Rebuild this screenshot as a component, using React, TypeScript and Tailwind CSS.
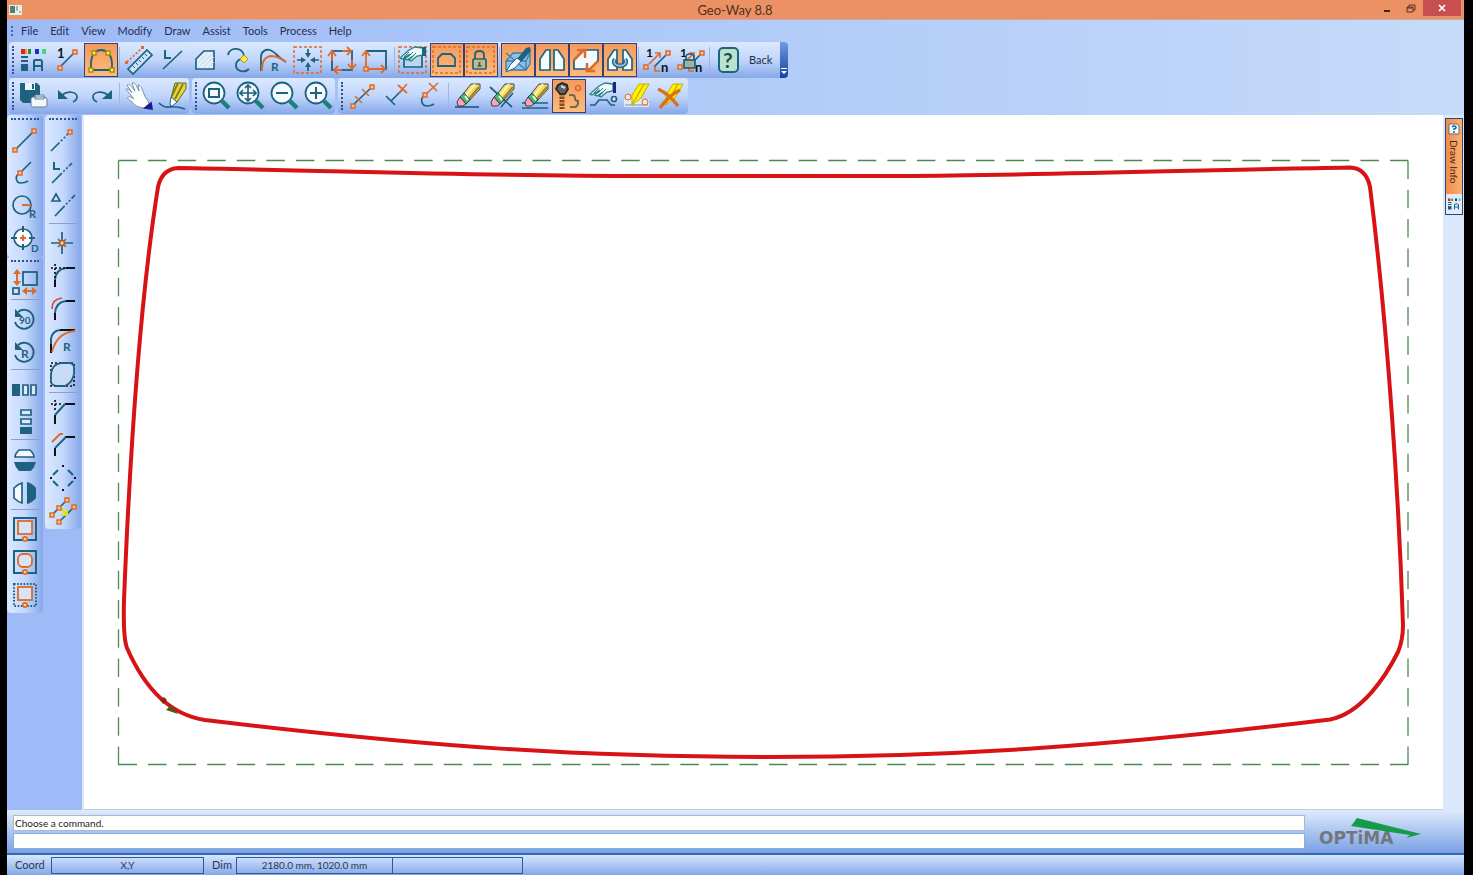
import { useState } from "react";
import type { ReactNode } from "react";
import clsx from "clsx";

const T = "#1f6280";
const O = "#dd6b2a";

// ---- shared glyph pieces, all drawn on a 32x32 grid ----

function Node({ x, y, fill = "#f7c79a", stroke = O }: { x: number; y: number; fill?: string; stroke?: string }) {
  return <rect x={x - 2} y={y - 2} width="4" height="4" fill={fill} stroke={stroke} strokeWidth="1.5" />;
}

function Glyph({ x, y, size = 10, fill = T, children }: { x: number; y: number; size?: number; fill?: string; children: string }) {
  return (
    <text x={x} y={y} fontSize={size} fontWeight="700" fill={fill} stroke="none">
      {children}
    </text>
  );
}

function DashedFrame() {
  return <rect x="2" y="3" width="27" height="26" stroke={O} strokeWidth="1.5" strokeDasharray="3 2" />;
}

function Lens({ children }: { children: ReactNode }) {
  return (
    <>
      <path d="M22 21l7 7" stroke="#1b8079" strokeWidth="4.5" />
      <circle cx="14" cy="13" r="10.5" fill="#f4f9ff" stroke={T} strokeWidth="1.8" />
      {children}
    </>
  );
}

function Eraser() {
  return (
    <g strokeWidth="1">
      <path d="M20 4h9v5L18 21l-6-7z" fill="#f4d967" stroke="#33484f" />
      <path d="M24 4l-9 12" stroke="#fff3b0" strokeWidth="2" />
      <path d="M28 7L17 20" stroke="#9c8426" strokeWidth="2" />
      <path d="M13 13l6 7-4 4-6-7z" fill="#3fbf68" stroke="#174f49" />
      <path d="M14 16l3 4" stroke="#e9fff0" strokeWidth="2" />
      <path d="M9 17l6 7-3 2H7l-1-4z" fill="#f2a5c6" stroke="#5c2c44" />
    </g>
  );
}

function Highlighter() {
  return (
    <>
      <path d="M18 4L11 15v10l9-7 8-14z" fill="#fff200" stroke="#c4a90c" strokeWidth="1" />
      <path d="M23 4l-8 14M11 24l4-6" stroke="#caa400" strokeWidth="1.2" />
    </>
  );
}

function PointingHand() {
  return (
    <>
      <path d="M26 4l-8-1-6 3-9 8 2 1 8-5-5 5 2 1 6-4-4 4 2 1 6-5 6-1z" fill="#e9f7f7" stroke="#2a7f86" strokeWidth="1.3" />
      <path d="M12 8l-5 5M16 8l-5 5M19 9l-4 4" stroke="#2a7f86" strokeWidth="1" />
    </>
  );
}

function Padlock() {
  return (
    <>
      <path d="M10 15v-4q0-4 4.500-4t4.500 4v4" strokeWidth="1.8" />
      <rect x="8" y="15" width="13" height="10" rx="1" fill="#c3ba84" />
      <path d="M14.500 18v4M12.500 22h4" stroke="#37584f" />
    </>
  );
}

function RotateRing() {
  return (
    <>
      <path d="M9 9a9.500 9.500 0 1 1-3 10" strokeWidth="1.8" />
      <path d="M6 6v8h8z" fill={T} stroke="none" />
    </>
  );
}

function PlateFrame({ dotted, round }: { dotted?: boolean; round?: boolean }) {
  return (
    <>
      <rect x="5" y="5" width="22" height="22" strokeWidth="2" strokeDasharray={dotted ? "1.6 1.6" : undefined} />
      <rect x="9" y="8" width="14" height="13" rx={round ? 5 : 0} fill="#d9e3f6" stroke={O} strokeWidth="1.8" />
      <circle cx="16" cy="26" r="2.2" fill="#fbd1ad" stroke={O} />
    </>
  );
}

function NumberedArrow() {
  return (
    <>
      <Glyph x={5} y={13} size={12} fill="#111">1</Glyph>
      <path d="M13 23L25 11" />
      <path d="M8 20l10-10M14 9l5 0v5M14 22v5h5" stroke={O} />
      <Node x={27} y={9} />
      <Node x={5} y={23} />
      <Glyph x={20} y={28} size={13} fill="#111">n</Glyph>
    </>
  );
}

const GLYPHS = {
  layers: (
    <g stroke="none">
      <path d="M4 5h4v5H4z" fill="#e3211c" />
      <path d="M8 5h2v5H8z" fill="#e8a31d" />
      <path d="M11 5h3v5h-3z" fill="#2f8b3c" />
      <path d="M18 5h4v5h-4z" fill="#1b2fc4" />
      <path d="M25 5h2v5h-2z" fill="#35d7c2" />
      <path d="M27 5h2v5h-2z" fill="#55d63b" />
      <path d="M4 12h7v2H4zM4 16h7v2H4zM4 20h7v7H4z" fill={T} />
      <path d="M17 27V17q0-1 1-1h5q2 0 2 2v9M17 22h8" stroke={T} strokeWidth="2" />
    </g>
  ),
  numberLine: (
    <>
      <path d="M8 24L24 8" />
      <Node x={9} y={24} />
      <Node x={24} y={8} />
      <Glyph x={6} y={14} size={13} fill="#111">1</Glyph>
    </>
  ),
  vertices: (
    <>
      <path d="M6 26v-6C6 15 7 12 9 9c4-4 10-4 14 0 3 3 4 6 4 11v6z" strokeWidth="1.8" />
      {[[6, 26], [27, 26], [9, 9], [23, 9]].map(([x, y]) => (
        <Node key={`${x}-${y}`} x={x} y={y} fill="#fff23a" stroke="#a58f12" />
      ))}
    </>
  ),
  ruler: (
    <>
      <path d="M25 6l5 5-19 19-5-5z" fill="#cfe1f7" />
      <path d="M11 22l2 2M14 19l2 2M17 16l2 2M20 13l2 2M23 10l2 2" strokeWidth="1" />
      <path d="M5 18L20 4" stroke={O} strokeDasharray="2 2" />
      <path d="M3 17h3v3H3zM19 2h3v3h-3z" fill={O} stroke="none" />
    </>
  ),
  lineL: (
    <>
      <path d="M9 6v8h6" strokeWidth="2" />
      <path d="M7 25L26 7" />
    </>
  ),
  polygon: (
    <>
      <path d="M6 25V15l8-8h10v18z" fill="#e4effc" />
      <path d="M8 24l15-15M13 24l11-11M18 24l6-6M8 19l9-9" stroke="#c3d5e8" strokeWidth="1" />
    </>
  ),
  arcs: (
    <>
      <path d="M4 11C6 2 20 3 20 13c-1 3-8 1-8 8 0 7 9 8 13 4" strokeWidth="1.8" />
      <path d="M20 11l4 4-4 4-4-4z" fill="#f5ef35" stroke="#a59a20" strokeWidth="1" />
    </>
  ),
  curveR: (
    <>
      <path d="M3 27V13C3 7 8 5 12 6c6 2 8 8 16 12" strokeWidth="1.8" />
      <path d="M4 27c0-9 2-14 9-15 6 0 11 3 15 6" stroke={O} strokeWidth="1.8" />
      <Glyph x={13} y={27} size={12}>R</Glyph>
    </>
  ),
  center: (
    <>
      <DashedFrame />
      <path d="M16 5v6M16 27v-6M5 16h6M27 16h-6" />
      <path d="M13 9h6l-3 5zM13 23h6l-3-5zM9 13v6l5-3zM23 13v6l-5-3z" fill={T} stroke="none" />
    </>
  ),
  rotateSquare: (
    <>
      <rect x="6" y="7" width="20" height="19" strokeWidth="1.8" />
      <path d="M16 7h9M21 3l4 4-4 4M26 16v9M22 20l4 5 4-5M16 26H8M12 22l-4 4 4 4M6 17V8M2 12l4-5 4 5" stroke={O} strokeWidth="1.8" />
    </>
  ),
  originSquare: (
    <>
      <path d="M6 7h20v19" strokeWidth="1.8" />
      <path d="M6 25V8M2 12l4-5 4 5M6 25h19M21 21l4 4-4 4" stroke={O} strokeWidth="1.8" />
      <Node x={6} y={25} />
    </>
  ),
  selectHand: (
    <>
      <DashedFrame />
      <path d="M7 12v11h18V12" fill="#bcd6ee" />
      <PointingHand />
      <path d="M25 3h4v9h-4z" fill={T} stroke="none" />
    </>
  ),
  framedShape: (
    <>
      <DashedFrame />
      <path d="M7 22v-8l4-4h9l4 4v8z" strokeWidth="1.8" />
    </>
  ),
  framedLock: (
    <>
      <DashedFrame />
      <Padlock />
    </>
  ),
  envelope: (
    <>
      <path d="M4 17l7-8h17v11l-4 6H4z" fill="#8fc0e6" stroke="#3f7ea8" strokeWidth="1.3" />
      <path d="M4 17h20l4-8M24 17v9M4 9l20 17" stroke="#3f7ea8" strokeWidth="1.3" />
      <path d="M28 3l-4 1-9 11 4 3L29 7z" fill={T} stroke="none" />
      <path d="M15 14l4 3-6 7-9 4 4-7z" fill="#f5f9fb" strokeWidth="1" />
    </>
  ),
  halves: <path d="M4 26V15l6-9h4v20zM18 26V6h4l6 9v11z" fill="#f4fbff" />,
  flip: (
    <>
      <path d="M4 25v-9L13 6h15v11l-8 8z" fill="#f4fbff" />
      <path d="M4 16L14 6M28 17L18 27" stroke={O} strokeWidth="2.5" />
      <path d="M7 6h8v8M17 19v8h8" stroke={O} strokeWidth="2.5" />
    </>
  ),
  joinHalves: (
    <>
      <path d="M4 26V15l6-9h3v20zM19 26V6h3l6 9v11z" fill="#f4fbff" />
      <path d="M11 15c-5 9 15 9 10 0" stroke={T} strokeWidth="4.5" />
      <path d="M11 15c-5 9 15 9 10 0" stroke="#8fc0e6" strokeWidth="1.8" />
    </>
  ),
  sequence: <NumberedArrow />,
  sequenceLock: (
    <>
      <NumberedArrow />
      <path d="M11 16v-3q0-3 4-3t4 3v3" />
      <rect x="9" y="16" width="11" height="8" fill="#a5b29a" />
    </>
  ),
  help: (
    <>
      <rect x="7" y="4" width="19" height="24" rx="4" fill="#b9e3cf" strokeWidth="2" />
      <Glyph x={11} y={24} size={21} fill="#1d4f55">?</Glyph>
    </>
  ),
  save: (
    <>
      <path d="M3 3h17l3 3v17H6l-3-3z" fill={T} stroke="none" />
      <path d="M8 3h10v7H8z" fill="#e8f4fb" stroke="none" />
      <path d="M15 4h2v5h-2z" fill={T} stroke="none" />
      <path d="M18 15h9v4h-9zM14 19q0-2 2-2h11q3 0 3 3v5q0 2-2 2H16q-2 0-2-2z" fill="#f5f8fb" stroke="#5f7f99" strokeWidth="1" />
    </>
  ),
  undo: (
    <>
      <path d="M7 10v9h10z" fill={T} stroke="none" />
      <path d="M11 15c6-5 15-3 15 2q0 3-4 5" />
    </>
  ),
  redo: (
    <>
      <path d="M27 10v9H17z" fill={T} stroke="none" />
      <path d="M23 15c-6-5-15-3-15 2q0 3 4 5" />
    </>
  ),
  hand: (
    <>
      <path d="M4 9c2-1 4 2 6 4L5 5c2-2 4 1 8 6L10 3c3-1 4 2 7 8l-1-6c3 0 4 4 6 9 1 4 5 7 5 10l-5 4c-5-1-8-1-12-6-2-2-6-4-4-5s4 1 6 2c-3-4-7-8-8-10z" fill="#fff" stroke="#7792a5" strokeWidth="1" />
      <path d="M23 28l6-5 1 6z" fill="#17208c" stroke="#17208c" />
    </>
  ),
  pencil: (
    <>
      <path d="M19 3h11v6l-9 13-6-4z" fill="#ecd435" stroke="#5b6b22" strokeWidth="1" />
      <path d="M22 3l-6 13M27 4l-8 15" stroke="#7b7d24" strokeWidth="1.8" />
      <path d="M15 17l6 5-6 5-1-3z" fill="#fff" stroke={T} strokeWidth="1" />
      <path d="M14 25v3l3-2z" fill={T} stroke="none" />
      <path d="M3 23q5 5 11 4t15 2" />
    </>
  ),
  zoomWindow: <Lens><rect x="9" y="9" width="10" height="8" strokeWidth="2" /></Lens>,
  zoomAll: <Lens><path d="M14 5v16M6 13h16M11 8l3-3 3 3M11 18l3 3 3-3M9 10l-3 3 3 3M19 10l3 3-3 3" /></Lens>,
  zoomOut: <Lens><path d="M8 13h12" strokeWidth="2" /></Lens>,
  zoomIn: <Lens><path d="M8 13h12M14 7v12" strokeWidth="2" /></Lens>,
  divide: (
    <>
      <path d="M7 25L26 7" />
      <path d="M9 16l7 7M16 9l7 7" stroke={O} strokeWidth="1.5" />
      <Node x={7} y={26} />
      <Node x={26} y={7} />
    </>
  ),
  tick: (
    <>
      <path d="M6 16l9 9M11 21L23 9" />
      <path d="M18 5l9 8M27 4l-8 9" stroke={O} />
    </>
  ),
  hookTick: (
    <>
      <path d="M11 15c-6 4-3 11 2 11q4 0 7-2" />
      <path d="M11 15l13-12M15 3l8 8" stroke={O} />
      <Node x={11} y={15} />
    </>
  ),
  erase: (
    <>
      <path d="M4 27h24" />
      <Eraser />
    </>
  ),
  eraseCross: (
    <>
      <path d="M5 7l22 20M16 27L28 13" />
      <Eraser />
    </>
  ),
  eraseLines: (
    <>
      <path d="M3 23h26M3 28h26" strokeWidth="1.5" />
      <Eraser />
    </>
  ),
  screw: (
    <>
      <path d="M9 13v16" stroke="#8b4a1e" strokeWidth="5" strokeDasharray="2.500 1" />
      <path d="M5 5l4-2 5 2 1 4-3 5H7L3 9z" fill="#5d6265" stroke="#222425" />
      <path d="M8 6l4 2" stroke="#d5dadd" strokeWidth="2" />
      <circle cx="25" cy="8" r="2.5" stroke={O} />
      <path d="M16 15h3q3 0 3 3t3 3v2q0 3-3 4h-5" stroke="#6d6b4c" strokeWidth="2" />
    </>
  ),
  drag: (
    <>
      <PointingHand />
      <path d="M26 2h3v11h-3z" fill="#1c2290" stroke="none" />
      <path d="M3 25h5l4-5h8l4 5h4" />
      <circle cx="27" cy="19" r="2.5" fill="#dceafa" />
    </>
  ),
  highlight: (
    <>
      <path d="M3 19h25v8H3z" fill="#dfeaf2" stroke="none" />
      <path d="M4 25h23" stroke="#9fb8c6" />
      <Highlighter />
      <circle cx="7" cy="17" r="3" fill="#f6e6dd" stroke={O} strokeWidth="1" />
      <circle cx="24" cy="22" r="3" fill="#f6e6dd" stroke={O} strokeWidth="1" />
    </>
  ),
  highlightOff: (
    <>
      <Highlighter />
      <path d="M3 9q11 5 20 17M25 10Q13 16 5 28" stroke="#d9731b" strokeWidth="3.5" />
    </>
  ),
  segment: (
    <>
      <path d="M6 26L25 7" />
      <Node x={6} y={26} />
      <Node x={25} y={7} />
    </>
  ),
  hook: (
    <>
      <path d="M22 5L11 16M11 16c-6 3-4 10 1 10q4 0 7-2" />
      <Node x={11} y={16} />
    </>
  ),
  circleR: (
    <>
      <circle cx="13" cy="15" r="9" />
      <path d="M13 15h9" stroke={O} strokeWidth="2" />
      <Glyph x={20} y={28} size={11}>R</Glyph>
    </>
  ),
  circleD: (
    <>
      <circle cx="14" cy="15" r="9" fill="#f8fbff" />
      <path d="M14 3v6M14 21v6M2 15h6M20 15h6" strokeWidth="2" />
      <path d="M14 12v6M11 15h6" stroke={O} strokeWidth="2" />
      <Glyph x={22} y={29}>D</Glyph>
    </>
  ),
  scale: (
    <>
      <rect x="14" y="6" width="14" height="13" strokeWidth="1.8" />
      <rect x="4" y="22" width="6" height="6" />
      <path d="M8 6v11M15 25h10" stroke={O} strokeWidth="2" />
      <path d="M4 8l4-5 4 5zM4 15l4 5 4-5zM18 21l-5 4 5 4zM23 21l5 4-5 4z" fill={O} stroke="none" />
    </>
  ),
  rotate90: (
    <>
      <RotateRing />
      <Glyph x={10} y={21} size={10}>90</Glyph>
    </>
  ),
  rotateR: (
    <>
      <RotateRing />
      <Glyph x={12} y={22} size={12}>R</Glyph>
    </>
  ),
  alignRow: (
    <>
      <path d="M3 11h8v12H3z" fill={T} stroke="none" />
      <path d="M14 12h5v10h-5zM22 12h5v10h-5z" fill="#dce9fa" />
    </>
  ),
  alignColumn: (
    <>
      <path d="M11 21h12v7H11z" fill={T} stroke="none" />
      <path d="M12 4h10v5H12zM12 13h10v5H12z" fill="#dce9fa" />
    </>
  ),
  mirrorV: (
    <>
      <path d="M6 14q0-3 4-7h11q4 4 4 7z" fill="#f5f9ff" />
      <path d="M5 19h22q-1 5-5 9H10q-4-4-5-9z" fill={T} stroke="none" />
    </>
  ),
  mirrorH: (
    <>
      <path d="M13 7v20q-4-1-8-5V12q4-4 8-5z" fill="#f5f9ff" />
      <path d="M18 6q5 1 9 6v10q-4 5-9 6z" fill={T} stroke="none" />
    </>
  ),
  plateSquare: <PlateFrame />,
  plateRound: <PlateFrame round />,
  plateDotted: <PlateFrame dotted />,
  dashLine: (
    <>
      <path d="M4 27L23 8" strokeDasharray="12 2 2 2 2 2" />
      <Node x={23} y={8} />
    </>
  ),
  dashL: (
    <>
      <path d="M7 5v7h6" strokeWidth="2" />
      <path d="M5 26L25 6" strokeDasharray="14 2 2 2 2 2" />
    </>
  ),
  dashAngle: (
    <>
      <path d="M9 4l4 7H5z" />
      <path d="M8 26L28 5" strokeDasharray="14 2 2 2 2 2" />
    </>
  ),
  point: (
    <>
      <path d="M15 5v22M4 16h22" />
      <path d="M11 12l8 8M19 12l-8 8" stroke="#a9602f" />
      <circle cx="15" cy="16" r="2.5" fill="#f4cfae" stroke="#a9602f" />
    </>
  ),
  fillet: (
    <>
      <path d="M8 27v-7M19 8h9" stroke="#111" strokeWidth="2" />
      <path d="M8 20Q9 9 19 8" strokeWidth="2" />
      <path d="M4 8h14M8 4v14" stroke="#111" strokeDasharray="2 2" />
    </>
  ),
  filletArc: (
    <>
      <path d="M8 27v-7M19 8h9" stroke="#111" strokeWidth="2" />
      <path d="M8 20Q9 9 19 8" strokeWidth="2" />
      <path d="M5 16q0-10 10-11" stroke="#d9482a" />
    </>
  ),
  filletR: (
    <>
      <path d="M4 27V13q1-8 9-9" strokeWidth="2" />
      <path d="M13 4h15M4 18v9" stroke="#111" strokeWidth="2" />
      <path d="M28 5C15 6 8 14 5 26" stroke={O} strokeWidth="1.8" />
      <Glyph x={16} y={25} size={12}>R</Glyph>
    </>
  ),
  filletAll: (
    <>
      <rect x="4" y="4" width="23" height="23" stroke="#111" strokeDasharray="2 2" />
      <path d="M4 15Q5 5 14 4h8q5 0 5 5v6q-2 9-9 12H9q-5-1-5-5z" fill="#c9dcf7" strokeWidth="1.8" />
    </>
  ),
  chamfer: (
    <>
      <path d="M8 28v-9M18 8h10" stroke="#111" strokeWidth="2" />
      <path d="M8 19L18 8" strokeWidth="2" />
      <path d="M4 8h12M8 4v12" stroke="#111" strokeDasharray="2 2" />
    </>
  ),
  chamferArc: (
    <>
      <path d="M8 27v-8M18 8h10" stroke="#111" strokeWidth="2" />
      <path d="M8 19L19 8" strokeWidth="2" />
      <path d="M5 13l8-8h3" stroke={O} strokeWidth="2" />
    </>
  ),
  chamferAll: (
    <>
      <path d="M11 8l-5 5M21 8l5 5M6 19l5 5M26 19l-5 5" strokeWidth="2" />
      <path d="M15 3h2v2h-2zM15 27h2v2h-2zM3 15h2v2H3zM27 15h2v2h-2z" fill="#111" stroke="none" />
    </>
  ),
  parallel: (
    <>
      <path d="M5 20L20 5M12 27l15-15" />
      <path d="M14 13l6 7M20 14v6h-6" stroke="#d6e01c" strokeWidth="2" />
      <Node x={5} y={20} />
      <Node x={12} y={13} />
      <Node x={20} y={5} />
      <Node x={27} y={12} />
      <Node x={12} y={27} />
    </>
  ),
};

type GlyphName = keyof typeof GLYPHS;

interface Tool {
  icon: GlyphName;
  label: string;
}

const tool = (icon: GlyphName, label: string): Tool => ({ icon, label });

const MENUS = ["File", "Edit", "View", "Modify", "Draw", "Assist", "Tools", "Process", "Help"];

// Each toolbar is a list of groups; a divider is drawn between groups.
const MAIN_TOOLS: Tool[][] = [
  [tool("layers", "Layers"), tool("numberLine", "Element order"), tool("vertices", "Show vertices")],
  [
    tool("ruler", "Measure"),
    tool("lineL", "Line length"),
    tool("polygon", "Area"),
    tool("arcs", "Arc info"),
    tool("curveR", "Curve radius"),
    tool("center", "Center"),
    tool("rotateSquare", "Direction"),
    tool("originSquare", "Origin"),
  ],
  [tool("selectHand", "Select shape"), tool("framedShape", "Frame"), tool("framedLock", "Lock frame")],
  [tool("envelope", "Cut sheet"), tool("halves", "Split"), tool("flip", "Flip"), tool("joinHalves", "Join")],
  [tool("sequence", "Sequence"), tool("sequenceLock", "Lock sequence")],
  [tool("help", "Help topics")],
];

const FILE_TOOLS: Tool[][] = [
  [tool("save", "Save"), tool("undo", "Undo"), tool("redo", "Redo")],
  [tool("hand", "Pan"), tool("pencil", "Redraw")],
];

const ZOOM_TOOLS: Tool[][] = [
  [tool("zoomWindow", "Zoom window"), tool("zoomAll", "Zoom all"), tool("zoomOut", "Zoom out"), tool("zoomIn", "Zoom in")],
];

const EDIT_TOOLS: Tool[][] = [
  [tool("divide", "Divide"), tool("tick", "Break line"), tool("hookTick", "Break arc")],
  [
    tool("erase", "Erase"),
    tool("eraseCross", "Erase crossing"),
    tool("eraseLines", "Erase all"),
    tool("screw", "Tool path"),
    tool("drag", "Drag point"),
    tool("highlight", "Highlight"),
    tool("highlightOff", "Clear highlight"),
  ],
];

const DRAW_TOOLS: Tool[][] = [
  [tool("segment", "Line"), tool("hook", "Arc"), tool("circleR", "Circle by radius"), tool("circleD", "Circle by diameter")],
];

const TRANSFORM_TOOLS: Tool[][] = [
  [tool("scale", "Scale")],
  [tool("rotate90", "Rotate 90"), tool("rotateR", "Rotate")],
  [tool("alignRow", "Copy in row"), tool("alignColumn", "Copy in column")],
  [tool("mirrorV", "Mirror vertical"), tool("mirrorH", "Mirror horizontal")],
  [tool("plateSquare", "Square plate"), tool("plateRound", "Round plate"), tool("plateDotted", "Free plate")],
];

const ASSIST_TOOLS: Tool[][] = [
  [tool("dashLine", "Assist line"), tool("dashL", "Assist line by length"), tool("dashAngle", "Assist line by angle")],
  [
    tool("point", "Point"),
    tool("fillet", "Fillet"),
    tool("filletArc", "Fillet arc"),
    tool("filletR", "Fillet by radius"),
    tool("filletAll", "Fillet all"),
  ],
  [tool("chamfer", "Chamfer"), tool("chamferArc", "Chamfer outer"), tool("chamferAll", "Chamfer all"), tool("parallel", "Parallel")],
];

const INITIAL_ACTIVE: GlyphName[] = ["vertices", "framedShape", "framedLock", "envelope", "halves", "flip", "joinHalves", "screw"];

function ToolIcon({ name, className }: { name: GlyphName; className?: string }) {
  return (
    <svg viewBox="0 0 32 32" className={clsx("shrink-0", className ?? "size-8")} fill="none" stroke={T} strokeWidth="1.7" aria-hidden>
      {GLYPHS[name]}
    </svg>
  );
}

interface ToolbarProps {
  groups: Tool[][];
  active: GlyphName[];
  onToggle: (name: GlyphName) => void;
  vertical?: boolean;
  children?: ReactNode;
}

function Toolbar({ groups, active, onToggle, vertical = false, children }: ToolbarProps) {
  return (
    <div
      role="toolbar"
      className={clsx(
        "flex shrink-0 rounded-sm",
        vertical
          ? "w-9 flex-col items-center bg-linear-to-r from-[#dbe9ff] via-[#c3d8fc] to-[#86a7e8] pb-0.5"
          : "h-9 items-center bg-linear-to-b from-[#dbe9ff] via-[#c1d6fb] to-[#86a8e9]",
      )}
    >
      <span
        className={clsx(
          "shrink-0 border-dotted border-[#34508f]",
          vertical ? "my-[3px] h-px w-7 border-t-2" : "mr-0.5 ml-[3px] h-7 w-px border-l-2",
        )}
      />
      {groups.map((group, i) => (
        <div key={group[0].icon} className={clsx("flex", vertical && "flex-col items-center")}>
          {i > 0 ? (
            <span
              className={clsx(
                "shrink-0",
                vertical ? "mt-px mb-0.5 h-px w-7 bg-[#8d9fc4]" : "mx-px my-1 w-px bg-[#a3b6da]",
              )}
            />
          ) : null}
          {group.map(({ icon, label }) => (
            <button
              key={icon}
              type="button"
              aria-label={label}
              aria-pressed={active.includes(icon)}
              onClick={() => onToggle(icon)}
              className={clsx(
                "grid w-[34px] place-items-center",
                vertical ? "h-[33px]" : "h-[34px]",
                active.includes(icon) && "border border-[#3b3d77] bg-linear-to-b from-[#f29a60] to-[#fdbb79]",
              )}
            >
              <ToolIcon name={icon} />
            </button>
          ))}
        </div>
      ))}
      {children}
    </div>
  );
}

function TitleBar() {
  return (
    <header className="flex h-5 shrink-0 items-center border-b border-[#d3a79b] bg-[#eb9164]">
      <svg viewBox="0 0 14 12" className="ml-0.5 h-3 w-3.5" aria-hidden>
        <path d="M0 1h13v10H0z" fill="#e9eee9" />
        <path d="M1 2h5v7H1z" fill="#4f8279" />
        <path d="M7 2h2v5H7zM10 7h2v2h-2z" fill="#9db7b0" />
      </svg>
      <h1 className="flex-1 pl-[72px] text-center text-[13px] leading-5 text-[#54301f]">Geo-Way 8.8</h1>
      <div className="flex h-full items-start">
        <button type="button" aria-label="Minimize" className="grid h-[17px] w-6 place-items-center">
          <svg viewBox="0 0 10 10" className="size-2.5" aria-hidden>
            <path d="M2 6h6v2H2z" fill="#3b2318" />
          </svg>
        </button>
        <button type="button" aria-label="Restore" className="grid h-[17px] w-6 place-items-center">
          <svg viewBox="0 0 10 10" className="size-2.5" fill="none" stroke="#5a3322" aria-hidden>
            <path d="M1 3h6v5H1zM3 3V1h6v5H7M1 4h6" />
          </svg>
        </button>
        <button type="button" aria-label="Close" className="mr-[3px] grid h-4 w-[38px] place-items-center bg-[#c84f50]">
          <svg viewBox="0 0 10 10" className="size-2.5" stroke="#fff" strokeWidth="1.7" aria-hidden>
            <path d="M2 2l6 6M8 2L2 8" />
          </svg>
        </button>
      </div>
    </header>
  );
}

function MenuBar() {
  return (
    <nav className="flex h-[22px] shrink-0 items-center pl-1">
      <span className="mr-0.5 h-2.5 w-px border-l-2 border-dotted border-[#4a64a0]" />
      {MENUS.map((menu) => (
        <button key={menu} type="button" className="px-1.5 text-[11px] leading-5 text-[#26304a]">
          {menu}
        </button>
      ))}
    </nav>
  );
}

function Drawing() {
  return (
    <svg viewBox="84 115 1359 694" className="h-full w-full" fill="none" aria-label="Panel outline">
      <g stroke="#4d8b4d" strokeWidth="1.3">
        <path d="M118.500 160.500H1408M118.500 764.500H1408" strokeDasharray="18.500 11.070" />
        <path d="M118.500 160.500V765M1408 160.500V765" strokeDasharray="18.500 10.800" />
      </g>
      <path
        d="M178 168C320 170 480 176 640 176H900C1050 175 1200 170 1350 167.500Q1366 168 1370 187C1388 330 1399 500 1403 625Q1403 640 1398 652C1386 676 1362 713 1330 719.500C1120 745 960 757 770 757C580 757 430 747 205 720C165 714 141 680 127 648Q123 638 124 600C130 450 140 300 158 187Q162 169 178 168Z"
        stroke="#d81316"
        strokeWidth="4"
        strokeLinejoin="round"
      />
      <path d="M160 700l4-3 3 3-4 4z" fill="#8a2a12" />
      <path d="M166 710l5-5 7 9z" fill="#4f5a12" />
    </svg>
  );
}

function InfoDock() {
  return (
    <aside className="w-[21px] shrink-0 bg-[#dbe8fb] pt-[3px] pl-0.5">
      <div className="flex w-[18px] flex-col border border-[#34436f]">
        <button
          type="button"
          className="flex h-[75px] w-full flex-col items-center gap-[5px] bg-linear-to-r from-[#f08b48] to-[#fbb071] pt-1 text-[10px] leading-4 text-[#3c2b21]"
        >
          <svg viewBox="0 0 12 12" className="size-3 shrink-0" aria-hidden>
            <path d="M1 1h8l2 2v8H1z" fill="#f3faff" stroke="#56758c" />
            <path d="M4 4q2-2 4 0 0 2-2 2v1M6 8v2" fill="none" stroke={T} strokeWidth="1.5" />
          </svg>
          <span className="[writing-mode:vertical-rl] whitespace-nowrap">Draw Info</span>
        </button>
        <button type="button" aria-label="Layer list" className="grid h-5 w-full place-items-center bg-[#dfeafb]">
          <ToolIcon name="layers" className="size-4" />
        </button>
      </div>
    </aside>
  );
}

function OptimaLogo() {
  return (
    <svg viewBox="0 0 104 30" className="h-[30px] w-[104px] shrink-0" aria-label="Optima">
      <text x="0" y="27" fontSize="17" fontWeight="700" fill="#73767c" className="font-['DejaVu_Sans',sans-serif]">
        OPTiMA
      </text>
      <path d="M38 1L32 9 84 17l7 1-4 3 15-4z" fill="#169b4b" />
    </svg>
  );
}

function CommandPanel() {
  const [command, setCommand] = useState("");

  return (
    <section className="flex h-[45px] shrink-0 items-center border-b-2 border-[#3567b4] bg-linear-to-b from-[#dfebfc] to-[#7aa0e3] pr-[41px] pl-1.5">
      <div className="flex flex-1 flex-col gap-0.5">
        <output className="h-4 border border-[#a9b8cc] bg-white pl-px text-[10px] leading-3.5 text-[#222]">Choose a command.</output>
        <input
          type="text"
          aria-label="Command"
          value={command}
          onChange={(e) => setCommand(e.target.value)}
          className="h-4 border border-[#7fb2e2] bg-white text-[10px] text-[#222] outline-none"
        />
      </div>
      <div className="ml-3.5">
        <OptimaLogo />
      </div>
    </section>
  );
}

function StatusBar() {
  const cell = "flex h-[17px] items-center justify-center border border-[#3158a6] text-[10px]";

  return (
    <footer className="flex h-5 shrink-0 items-center bg-linear-to-b from-[#d7e7fe] to-[#85a8e8] text-[11px] leading-4 text-[#2c3954]">
      <span className="w-11 pl-2">Coord</span>
      <span className={clsx(cell, "w-[153px]")}>X,Y</span>
      <span className="w-8 pr-1 text-right">Dim</span>
      <span className={clsx(cell, "w-[157px]")}>2180.0 mm, 1020.0 mm</span>
      <span className={clsx(cell, "w-[130px] border-l-0")} />
    </footer>
  );
}

export default function App() {
  const [active, setActive] = useState<GlyphName[]>(INITIAL_ACTIVE);

  const toggle = (name: GlyphName) =>
    setActive((prev) => (prev.includes(name) ? prev.filter((n) => n !== name) : [...prev, name]));

  const shared = { active, onToggle: toggle };

  return (
    <div className="h-screen min-h-[640px] bg-black pr-[9px] pl-[7px] font-['Lato','Open_Sans',sans-serif]">
      <div className="flex h-full flex-col overflow-hidden bg-linear-to-r from-[#9dbaf7] to-[#c5dbf9]">
        <TitleBar />
        <MenuBar />
        <div className="flex shrink-0 flex-col items-start pb-px pl-0.5">
          <Toolbar groups={MAIN_TOOLS} {...shared}>
            <button type="button" className="px-1 text-[11px] text-[#232d45]">
              Back
            </button>
            <span className="ml-1 flex h-full w-2 items-end justify-center rounded-r-sm bg-linear-to-b from-[#6f9ae2] to-[#17439c] pb-1">
              <svg viewBox="0 0 6 6" className="size-1.5" aria-hidden>
                <path d="M0 0h6v1H0zM0 3h6L3 6z" fill="#fff" />
              </svg>
            </span>
          </Toolbar>
          <div className="flex gap-[3px]">
            <Toolbar groups={FILE_TOOLS} {...shared} />
            <Toolbar groups={ZOOM_TOOLS} {...shared} />
            <Toolbar groups={EDIT_TOOLS} {...shared} />
          </div>
        </div>
        <main className="flex min-h-0 flex-1">
          <div className="flex w-[77px] shrink-0 items-start gap-0.5 border-r-2 border-[#dfe7f5] bg-[#9ebbf7] pr-px">
            <div className="flex flex-col">
              <Toolbar groups={DRAW_TOOLS} vertical {...shared} />
              <Toolbar groups={TRANSFORM_TOOLS} vertical {...shared} />
            </div>
            <Toolbar groups={ASSIST_TOOLS} vertical {...shared} />
          </div>
          <div className="min-w-0 flex-1 border-b border-[#c5cbd6] bg-white">
            <Drawing />
          </div>
          <InfoDock />
        </main>
        <CommandPanel />
        <StatusBar />
      </div>
    </div>
  );
}
